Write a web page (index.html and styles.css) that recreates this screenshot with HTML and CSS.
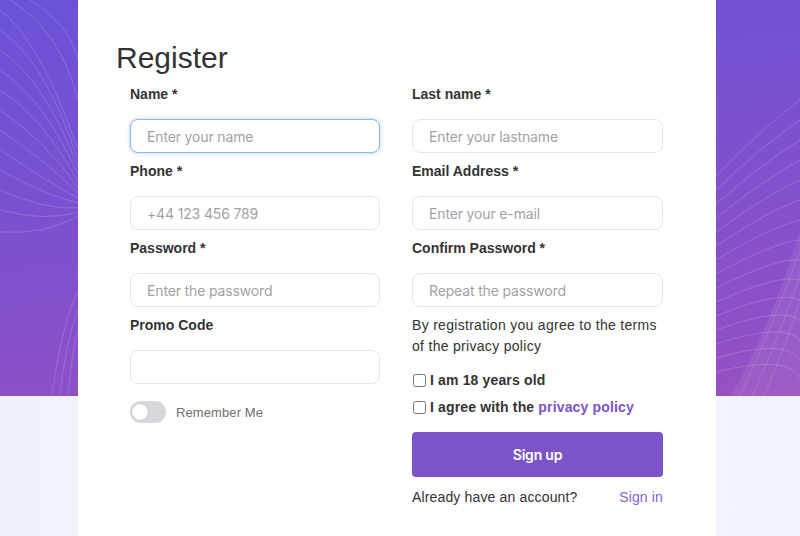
FILE: index.html
```html
<!DOCTYPE html>
<html lang="en">
<head>
<meta charset="utf-8">
<title>Register</title>
<link rel="stylesheet" href="styles.css">
</head>
<body>
<svg class="decor" width="800" height="396" viewBox="0 0 800 396" aria-hidden="true">
  <g fill="none" stroke="#ffffff" stroke-opacity="0.16" stroke-width="1">
    <path d="M0 10 Q40 40 78 150"/>
    <path d="M0 30 Q45 60 78 160"/>
    <path d="M0 50 Q45 80 78 168"/>
    <path d="M0 70 Q45 100 78 175"/>
    <path d="M0 90 Q45 120 78 182"/>
    <path d="M0 110 Q45 140 78 188"/>
    <path d="M0 130 Q45 160 78 193"/>
    <path d="M0 150 Q45 180 78 198"/>
    <path d="M0 170 Q45 195 78 203"/>
    <path d="M0 190 Q45 210 78 208"/>
    <path d="M0 210 Q45 222 78 212"/>
    <path d="M0 232 Q45 235 78 216"/>
    <path d="M10 0 Q60 30 78 100"/>
    <path d="M30 0 Q70 25 78 60"/>
    <path d="M52 396 Q60 330 78 290"/>
    <path d="M60 396 Q66 340 78 310"/>
    <path d="M68 396 Q72 350 78 330"/>
    <path d="M716 176 Q760 130 800 100"/>
    <path d="M716 190 Q762 146 800 120"/>
    <path d="M716 204 Q764 162 800 140"/>
    <path d="M716 218 Q766 178 800 160"/>
    <path d="M716 232 Q768 194 800 180"/>
    <path d="M716 246 Q770 210 800 200"/>
    <path d="M716 260 Q772 226 800 220"/>
    <path d="M716 274 Q774 242 800 240"/>
    <path d="M716 288 Q776 258 800 260"/>
    <path d="M716 302 Q778 274 800 280"/>
    <path d="M716 316 Q780 290 800 300"/>
    <path d="M716 330 Q782 306 800 320"/>
    <path d="M716 344 Q784 322 800 340"/>
    <path d="M716 358 Q786 338 800 360"/>
    <path d="M716 372 Q788 354 800 378"/>
  </g>
  <path d="M730 396 Q770 330 800 230 L800 396 Z" fill="#ffffff" fill-opacity="0.08"/>
  <g fill="none" stroke="#ffffff" stroke-opacity="0.12">
    <path d="M740 396 Q775 320 800 250"/>
    <path d="M752 396 Q782 330 800 275"/>
    <path d="M764 396 Q788 340 800 300"/>
  </g>
</svg>

<main class="card">
  <h1 class="title">Register</h1>
  <form class="form">
    <div class="col">
      <div class="field">
        <label class="label">Name *</label>
        <input class="input input-focus" type="text" placeholder="Enter your name">
      </div>
      <div class="field">
        <label class="label">Phone *</label>
        <input class="input" type="text" placeholder="+44 123 456 789">
      </div>
      <div class="field">
        <label class="label">Password *</label>
        <input class="input" type="password" placeholder="Enter the password">
      </div>
      <div class="field">
        <label class="label">Promo Code</label>
        <input class="input" type="text">
      </div>
      <div class="remember">
        <span class="toggle"><span class="knob"></span></span>
        <span class="remember-text">Remember Me</span>
      </div>
    </div>
    <div class="col col-right">
      <div class="field">
        <label class="label">Last name *</label>
        <input class="input" type="text" placeholder="Enter your lastname">
      </div>
      <div class="field">
        <label class="label">Email Address *</label>
        <input class="input" type="text" placeholder="Enter your e-mail">
      </div>
      <div class="field">
        <label class="label">Confirm Password *</label>
        <input class="input" type="password" placeholder="Repeat the password">
      </div>
      <p class="terms">By registration you agree to the terms of the privacy policy</p>
      <label class="check check-first"><input type="checkbox" class="box"><span>I am 18 years old</span></label>
      <label class="check"><input type="checkbox" class="box"><span>I agree with the <a class="link-strong" href="#">privacy policy</a></span></label>
      <button type="button" class="btn">Sign up</button>
      <div class="already">
        <span>Already have an account?</span>
        <a class="signin" href="#">Sign in</a>
      </div>
    </div>
  </form>
</main>
</body>
</html>
```

FILE: styles.css
```css
* { box-sizing: border-box; }

html, body {
  margin: 0;
  padding: 0;
  height: 536px;
  overflow: hidden;
}

body {
  font-family: "Liberation Sans", Arial, sans-serif;
  color: #333333;
  background:
    linear-gradient(172deg, #6c52d7 0%, #7751d2 35%, #8850ca 70%, #9750c1 100%) top left / 100% 396px no-repeat,
    linear-gradient(90deg, #eff1f9 0%, #f4f6fc 60%, #f0f3fb 100%);
  position: relative;
}

.decor {
  position: absolute;
  top: 0;
  left: 0;
}

.card {
  position: relative;
  width: 638px;
  min-height: 536px;
  margin-left: 78px;
  background: #ffffff;
  padding: 40px 52px 0 52px;
}

.title {
  margin: 0 0 8px -14px;
  font-size: 30px;
  line-height: 36px;
  font-weight: 400;
  color: #333333;
}

.form {
  display: flex;
  gap: 32px;
}

.col {
  width: 250px;
  display: flex;
  flex-direction: column;
}

.col-right {
  width: 251px;
}

.field {
  display: flex;
  flex-direction: column;
  margin-bottom: 8px;
}

.label {
  font-size: 14px;
  font-weight: 700;
  line-height: 20px;
  margin-bottom: 15px;
  color: #333333;
}

.input {
  width: 100%;
  height: 34px;
  border: 1px solid #e7e7e9;
  border-radius: 8px;
  padding: 0 16px;
  font-family: "Inter", "Liberation Sans", sans-serif;
  font-size: 14px;
  letter-spacing: -0.15px;
  color: #333333;
  outline: none;
  background: #ffffff;
}

.input::placeholder {
  color: #a2a2a6;
}

.input-focus {
  border-color: #8db6ea;
  box-shadow: 0 0 3px 1px rgba(120, 165, 230, 0.35);
}

.remember {
  display: flex;
  align-items: center;
  margin-top: 9px;
}

.toggle {
  width: 36px;
  height: 22px;
  border-radius: 11px;
  background: #d6d8de;
  display: flex;
  align-items: center;
  padding: 0 2px;
}

.knob {
  width: 16px;
  height: 16px;
  border-radius: 50%;
  background: #ffffff;
  box-shadow: 0 0 2px rgba(0, 0, 0, 0.2);
}

.remember-text {
  margin-left: 10px;
  font-size: 13px;
  letter-spacing: 0.1px;
  color: #6c6f75;
}

.terms {
  margin: 0;
  font-size: 14px;
  line-height: 21px;
  letter-spacing: 0.3px;
  color: #333333;
}

.check {
  display: flex;
  align-items: center;
  font-size: 14px;
  font-weight: 700;
  line-height: 20px;
  letter-spacing: 0.15px;
  margin-top: 7px;
  color: #333333;
}

.check-first {
  margin-top: 13px;
}

.box {
  width: 13px;
  height: 13px;
  margin: 0 4px 0 1px;
}

.link-strong {
  color: #7b55c7;
  text-decoration: none;
}

.btn {
  margin-top: 15px;
  height: 45px;
  width: 100%;
  border: none;
  border-radius: 4px;
  background: #7b55c8;
  color: #ffffff;
  font-family: "Inter", "Liberation Sans", sans-serif;
  font-size: 14px;
  font-weight: 600;
  letter-spacing: -0.2px;
}

.already {
  margin-top: 10px;
  display: flex;
  justify-content: space-between;
  font-size: 14px;
  line-height: 20px;
  letter-spacing: 0.15px;
  color: #333333;
}

.signin {
  color: #8661d2;
  text-decoration: none;
}
```
